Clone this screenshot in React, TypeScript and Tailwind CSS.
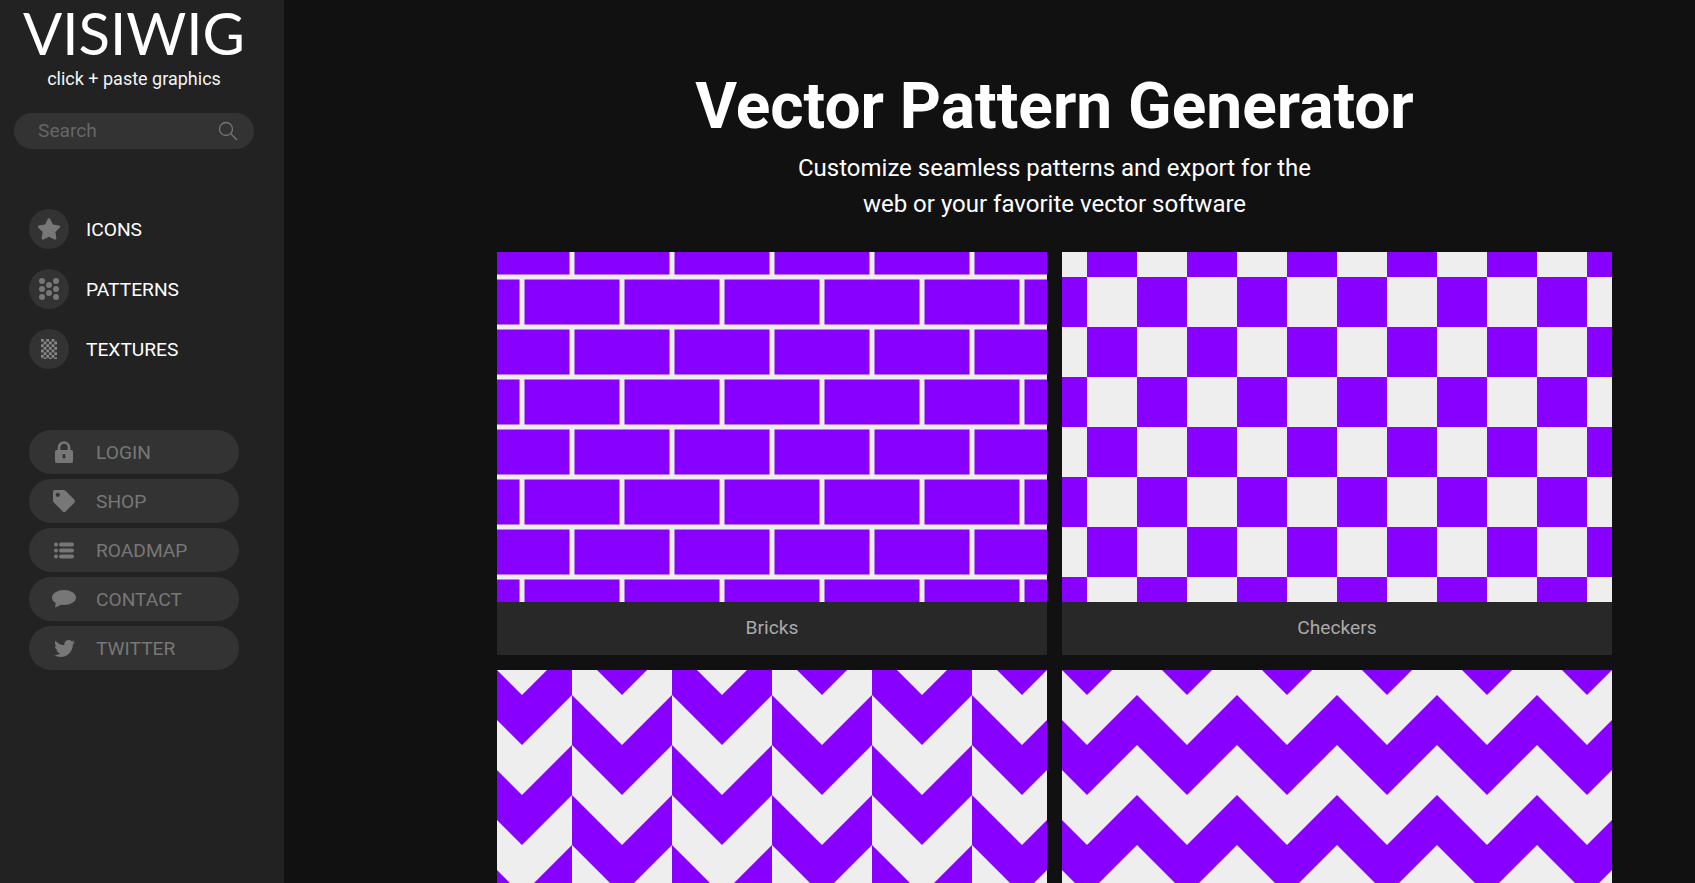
import React from "react";
import { FaStar, FaTag, FaTwitter } from "react-icons/fa";

const PURPLE = "#8800ff";
const LIGHT = "#eeeeee";

function Bricks() {
  const rects: React.ReactElement[] = [];
  const ys = [-22.5, 27.5, 77.5, 127.5, 177.5, 227.5, 277.5, 327.5];
  ys.forEach((y, r) => {
    const off = r % 2 === 0 ? 77.5 : 27.5;
    for (let i = -1; i < 7; i++) {
      rects.push(<rect key={`${r}-${i}`} x={off + i * 100} y={y} width={95} height={45} fill={PURPLE} />);
    }
  });
  return (
    <svg width="550" height="350" viewBox="0 0 550 350" className="block">
      <rect width="550" height="350" fill={LIGHT} />
      {rects}
    </svg>
  );
}

function Checkers() {
  const rects: React.ReactElement[] = [];
  for (let r = -1; r < 8; r++) {
    for (let c = -1; c < 12; c++) {
      if ((r + c) % 2 !== 0) {
        rects.push(<rect key={`${r}-${c}`} x={c * 50 + 25} y={r * 50 + 25} width={50} height={50} fill={PURPLE} />);
      }
    }
  }
  return (
    <svg width="550" height="350" viewBox="0 0 550 350" className="block" shapeRendering="crispEdges">
      <rect width="550" height="350" fill={LIGHT} />
      {rects}
    </svg>
  );
}

function Chevrons() {
  const polys: React.ReactElement[] = [];
  for (let c = -1; c < 7; c++) {
    const cx = 25 + c * 100;
    const shift = c % 2 === 0 ? 0 : 50;
    for (let k = -1; k < 5; k++) {
      const t = 25 + shift + k * 100;
      const pts = [
        [cx - 50, t - 50],
        [cx, t],
        [cx + 50, t - 50],
        [cx + 50, t],
        [cx, t + 50],
        [cx - 50, t],
      ]
        .map((p) => p.join(","))
        .join(" ");
      polys.push(<polygon key={`${c}-${k}`} points={pts} fill={PURPLE} />);
    }
  }
  return (
    <svg width="550" height="350" viewBox="0 0 550 350" className="block">
      <rect width="550" height="350" fill={LIGHT} />
      {polys}
    </svg>
  );
}

function Zigzag() {
  const polys: React.ReactElement[] = [];
  for (let k = -1; k < 5; k++) {
    const up: number[][] = [];
    const low: number[][] = [];
    for (let i = -1; i < 13; i++) {
      const x = 25 + i * 50;
      const odd = Math.abs(i) % 2 === 1;
      const y = (odd ? 25 : 75) + k * 100;
      up.push([x, y]);
      low.unshift([x, y + 50]);
    }
    polys.push(
      <polygon key={k} points={[...up, ...low].map((p) => p.join(",")).join(" ")} fill={PURPLE} />
    );
  }
  return (
    <svg width="550" height="350" viewBox="0 0 550 350" className="block">
      <rect width="550" height="350" fill={LIGHT} />
      {polys}
    </svg>
  );
}

function DotsIcon() {
  const pts = [
    [3, 3], [10, 7], [17, 3],
    [3, 11], [10, 15], [17, 11],
    [3, 19], [17, 19],
  ];
  return (
    <svg width="20" height="22" viewBox="0 0 20 22">
      {pts.map(([x, y]) => (
        <circle key={`${x}-${y}`} cx={x} cy={y} r="3" fill="#777777" />
      ))}
    </svg>
  );
}

function TextureIcon() {
  const rects: React.ReactElement[] = [];
  const s = 16 / 6;
  for (let r = 0; r < 8; r++) {
    for (let c = 0; c < 6; c++) {
      if ((r + c) % 2 === 0) rects.push(<rect key={`${r}-${c}`} x={c * s} y={r * s} width={s} height={s} fill="#888888" />);
    }
  }
  return (
    <svg width="16" height="20" viewBox="0 0 16 20">
      <rect width="16" height="20" fill="#3a3a3a" />
      {rects}
    </svg>
  );
}

function LockIcon() {
  return (
    <svg width="18" height="22" viewBox="0 0 18 22">
      <path d="M4 10V6.500a5 5 0 0 1 10 0V10" fill="none" stroke="#777777" strokeWidth="2.600" />
      <path d="M1.500 9h15A1.500 1.500 0 0 1 18 10.500v10a1.500 1.500 0 0 1-1.500 1.500h-15A1.500 1.500 0 0 1 0 20.500v-10A1.500 1.500 0 0 1 1.500 9z" fill="#777777" />
      <rect x="7.700" y="13" width="2.600" height="4.500" rx="1.300" fill="#333333" />
    </svg>
  );
}

function ListIcon() {
  return (
    <svg width="20" height="17" viewBox="0 0 20 17" fill="#777777">
      <circle cx="2" cy="2.500" r="2" />
      <circle cx="2" cy="8.500" r="2" />
      <circle cx="2" cy="14.500" r="2" />
      <rect x="5" y="0.500" width="15" height="4" rx="2" />
      <rect x="5" y="6.500" width="15" height="4" rx="2" />
      <rect x="5" y="12.500" width="15" height="4" rx="2" />
    </svg>
  );
}

function CommentIcon() {
  return (
    <svg width="24" height="18" viewBox="0 0 24 18" fill="#777777">
      <ellipse cx="12" cy="7.500" rx="12" ry="7.500" />
      <path d="M4 11.500L3 17.500C5.500 16.800 8 15.500 10 14z" />
    </svg>
  );
}

function NavItem({ icon, label }: { icon: React.ReactNode; label: string }) {
  return (
    <div className="flex items-center h-10">
      <div className="w-10 h-10 rounded-full bg-[#333333] flex items-center justify-center text-[#777777]">{icon}</div>
      <span className="ml-[17px] pt-[2px] text-[19.2px] text-white">{label}</span>
    </div>
  );
}

function Pill({ icon, label }: { icon: React.ReactNode; label: string }) {
  return (
    <div className="flex items-center h-11 w-[210px] rounded-full bg-[#333333] text-[#777777]">
      <div className="w-[67px] pl-[3px] flex items-center justify-center">{icon}</div>
      <span className="pt-[2px] text-[19.2px]">{label}</span>
    </div>
  );
}

function Card({ label, children }: { label?: string; children: React.ReactNode }) {
  return (
    <div className="w-[550px]">
      {children}
      {label ? (
        <div className="h-[53px] bg-[#282828] flex items-center justify-center text-[19.2px] text-[#aaaaaa]">{label}</div>
      ) : null}
    </div>
  );
}

export default function App() {
  return (
    <div className="flex h-screen overflow-hidden bg-[#111111] font-['Roboto',sans-serif]">
      <aside className="w-[284px] shrink-0 bg-[#222222] flex flex-col">
        <div className="w-[268px] h-[66px] flex items-center justify-center font-['Lato',sans-serif] font-normal text-[58px] leading-[66px] text-white">
          VISIWIG
        </div>
        <div className="w-[268px] h-[25px] flex items-center justify-center text-[18px] text-[#f4f4f4]">
          click + paste graphics
        </div>
        <div className="mt-[22px] ml-[14px] w-[240px] h-9 rounded-full bg-[#333333] flex items-center justify-between pl-6 pr-4 text-[19.2px] text-[#666666]">
          <span>Search</span>
          <svg width="20" height="20" viewBox="0 0 20 20" fill="none" stroke="#777777" strokeWidth="1.300">
            <circle cx="8" cy="8" r="6.500" />
            <path d="M13 13l6 6" />
          </svg>
        </div>
        <div className="mt-[60px] ml-[29px] flex flex-col gap-5">
          <NavItem icon={<FaStar size={24} />} label="ICONS" />
          <NavItem icon={<DotsIcon />} label="PATTERNS" />
          <NavItem icon={<TextureIcon />} label="TEXTURES" />
        </div>
        <div className="mt-[61px] ml-[29px] flex flex-col gap-[5px]">
          <Pill icon={<LockIcon />} label="LOGIN" />
          <Pill icon={<FaTag size={22} />} label="SHOP" />
          <Pill icon={<ListIcon />} label="ROADMAP" />
          <Pill icon={<CommentIcon />} label="CONTACT" />
          <Pill icon={<FaTwitter size={21} />} label="TWITTER" />
        </div>
      </aside>
      <main className="flex-1 pl-[213px]">
        <div className="w-[1115px] text-center">
          <h1 className="pt-[70px] text-[64px] leading-[74px] font-bold text-white">Vector Pattern Generator</h1>
          <p className="mt-[6px] text-[24px] leading-[36px] font-normal text-white">
            Customize seamless patterns and export for the
            <br />
            web or your favorite vector software
          </p>
        </div>
        <div className="mt-[30px] grid grid-cols-[550px_550px] gap-[15px]">
          <Card label="Bricks"><Bricks /></Card>
          <Card label="Checkers"><Checkers /></Card>
          <Card><Chevrons /></Card>
          <Card><Zigzag /></Card>
        </div>
      </main>
    </div>
  );
}
